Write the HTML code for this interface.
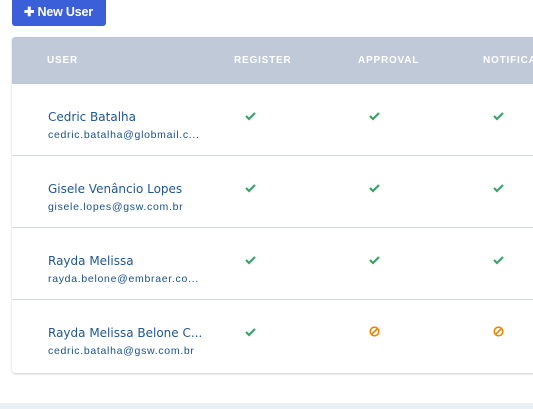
<!DOCTYPE html><html><head><style>
body{margin:0;width:533px;height:409px;overflow:hidden;background:#fff;font-family:"Liberation Sans",sans-serif;position:relative}
.btn{position:absolute;left:12px;top:0;width:94px;height:26px;background:#3a5fd9;border-radius:0 0 3px 3px;color:#fff;font-weight:bold;font-size:12.5px;line-height:25px;box-sizing:border-box;padding-left:12px;letter-spacing:-0.2px}
.card{position:absolute;left:12px;top:37px;width:540px;height:336px;border-radius:3px;box-shadow:0 1px 2px rgba(0,0,0,.2);overflow:hidden;background:#fff}
.hd{height:47px;background:#c0c9d8;position:relative}
.hd span{position:absolute;top:18px;color:#fff;font-weight:bold;font-size:10px;letter-spacing:0.8px}
.row{height:71px;border-bottom:1px solid #d6dce8;position:relative}
.n{position:absolute;left:36px;top:26px;color:#1e5796;font-size:12px;font-family:"DejaVu Sans",sans-serif}
.e{position:absolute;left:36px;top:45px;color:#1e4f8a;font-size:10.5px;letter-spacing:0.7px}
.i{position:absolute;top:27px}
.bot{position:absolute;left:0;top:403px;width:533px;height:6px;background:#eaeef5}
</style></head><body>
<div class="btn">✚ New User</div>
<div class="card">
<div class="hd"><span style="left:35px">USER</span><span style="left:222px">REGISTER</span><span style="left:346px">APPROVAL</span><span style="left:471px">NOTIFICATION</span></div>
<div class="row"><div class="n">Cedric Batalha</div><div class="e">cedric.batalha@globmail.c...</div>
<svg class="i" style="left:233px" width="11" height="10"><path d="M1 5l3 3 6-6" stroke="#3aa36a" stroke-width="2.2" fill="none"/></svg>
<svg class="i" style="left:357px" width="11" height="10"><path d="M1 5l3 3 6-6" stroke="#3aa36a" stroke-width="2.2" fill="none"/></svg>
<svg class="i" style="left:481px" width="11" height="10"><path d="M1 5l3 3 6-6" stroke="#3aa36a" stroke-width="2.2" fill="none"/></svg></div>
<div class="row"><div class="n">Gisele Venâncio Lopes</div><div class="e">gisele.lopes@gsw.com.br</div>
<svg class="i" style="left:233px" width="11" height="10"><path d="M1 5l3 3 6-6" stroke="#3aa36a" stroke-width="2.2" fill="none"/></svg>
<svg class="i" style="left:357px" width="11" height="10"><path d="M1 5l3 3 6-6" stroke="#3aa36a" stroke-width="2.2" fill="none"/></svg>
<svg class="i" style="left:481px" width="11" height="10"><path d="M1 5l3 3 6-6" stroke="#3aa36a" stroke-width="2.2" fill="none"/></svg></div>
<div class="row"><div class="n">Rayda Melissa</div><div class="e">rayda.belone@embraer.co...</div>
<svg class="i" style="left:233px" width="11" height="10"><path d="M1 5l3 3 6-6" stroke="#3aa36a" stroke-width="2.2" fill="none"/></svg>
<svg class="i" style="left:357px" width="11" height="10"><path d="M1 5l3 3 6-6" stroke="#3aa36a" stroke-width="2.2" fill="none"/></svg>
<svg class="i" style="left:481px" width="11" height="10"><path d="M1 5l3 3 6-6" stroke="#3aa36a" stroke-width="2.2" fill="none"/></svg></div>
<div class="row" style="border:0"><div class="n">Rayda Melissa Belone C...</div><div class="e">cedric.batalha@gsw.com.br</div>
<svg class="i" style="left:233px" width="11" height="10"><path d="M1 5l3 3 6-6" stroke="#3aa36a" stroke-width="2.2" fill="none"/></svg>
<svg class="i" style="left:357px;top:26px" width="11" height="11"><circle cx="5.5" cy="5.5" r="4.3" stroke="#e8890c" stroke-width="1.6" fill="none"/><path d="M2.5 8.5l6-6" stroke="#e8890c" stroke-width="1.6"/></svg>
<svg class="i" style="left:481px;top:26px" width="11" height="11"><circle cx="5.5" cy="5.5" r="4.3" stroke="#e8890c" stroke-width="1.6" fill="none"/><path d="M2.5 8.5l6-6" stroke="#e8890c" stroke-width="1.6"/></svg></div>
</div>
<div class="bot"></div>
</body></html>
